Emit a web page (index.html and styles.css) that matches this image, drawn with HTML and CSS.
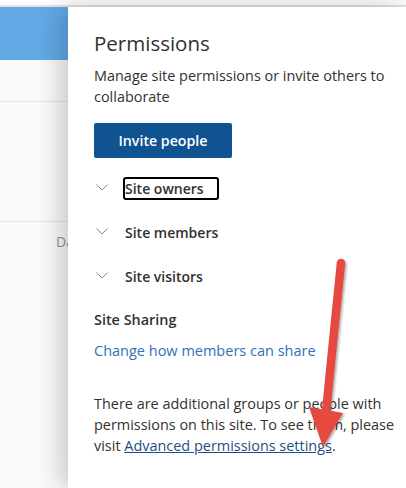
FILE: index.html
```html
<!DOCTYPE html>
<html lang="en">
<head>
<meta charset="utf-8">
<title>Permissions</title>
<link rel="stylesheet" href="styles.css">
</head>
<body>
<div class="topstrip"></div>
<div class="main">
  <div class="page">
    <div class="page-header"></div>
    <div class="page-row page-row-1"></div>
    <div class="page-row page-row-2"><span class="page-cell">Da</span></div>
  </div>
  <aside class="panel">
    <h1 class="title">Permissions</h1>
    <p class="subtitle">Manage site permissions or invite others to collaborate</p>
    <button class="invite">Invite people</button>
    <ul class="groups">
      <li class="group">
        <svg class="chev" width="12" height="7" viewBox="0 0 12 7"><path d="M0.5 0.5 L6 6 L11.5 0.5" fill="none" stroke="#8a8886" stroke-width="1"/></svg>
        <span class="group-label focused">Site owners</span>
      </li>
      <li class="group">
        <svg class="chev" width="12" height="7" viewBox="0 0 12 7"><path d="M0.5 0.5 L6 6 L11.5 0.5" fill="none" stroke="#8a8886" stroke-width="1"/></svg>
        <span class="group-label">Site members</span>
      </li>
      <li class="group">
        <svg class="chev" width="12" height="7" viewBox="0 0 12 7"><path d="M0.5 0.5 L6 6 L11.5 0.5" fill="none" stroke="#8a8886" stroke-width="1"/></svg>
        <span class="group-label">Site visitors</span>
      </li>
    </ul>
    <h2 class="section">Site Sharing</h2>
    <a class="share-link" href="#">Change how members can share</a>
    <p class="note">There are additional groups or people with permissions on this site. To see them, please visit <a class="adv-link" href="#">Advanced permissions settings</a>.</p>
  </aside>
</div>
<svg class="arrow" width="406" height="488" viewBox="0 0 406 488">
  <defs>
    <filter id="sh" x="-20%" y="-20%" width="140%" height="140%">
      <feDropShadow dx="1.5" dy="1.5" stdDeviation="1.2" flood-color="#000" flood-opacity="0.35"/>
    </filter>
  </defs>
  <g filter="url(#sh)" fill="#e5483f">
    <line x1="341" y1="263" x2="326" y2="412" stroke="#e5483f" stroke-width="8.5" stroke-linecap="round"/>
    <polygon points="309,407 343,413 323,447"/>
  </g>
</svg>
</body>
</html>
```

FILE: styles.css
```css
* { box-sizing: border-box; }
html, body { margin: 0; padding: 0; }
body {
  width: 406px;
  height: 488px;
  overflow: hidden;
  background: #ffffff;
  font-family: "Open Sans", "Noto Sans", sans-serif;
  color: #323130;
  position: relative;
}
.topstrip {
  height: 7px;
  border-bottom: 2px solid #e3e3e8;
  background: #fff;
}
.main {
  display: flex;
  height: 481px;
}
.page {
  width: 68px;
  flex: 0 0 68px;
  background: #fafafa;
  overflow: hidden;
}
.page-header {
  height: 53px;
  background: #62a9e6;
}
.page-row {
  border-bottom: 1px solid #e6e6e6;
}
.page-row-1 { height: 42px; }
.page-row-2 {
  height: 120px;
  display: flex;
  align-items: flex-end;
  padding-left: 56px;
}
.page-cell {
  font-size: 14px;
  color: #9a928e;
  white-space: nowrap;
  margin-bottom: -30px;
}
.panel {
  flex: 1;
  background: #fff;
  padding: 22px 8px 0 26px;
  box-shadow: -6px 0 26px rgba(0, 0, 0, 0.22);
  position: relative;
}
.title {
  margin: 0;
  font-size: 20.5px;
  font-weight: 400;
  line-height: 28px;
}
.subtitle {
  margin: 9px 0 0;
  font-size: 14.45px;
  line-height: 20.5px;
}
.invite {
  margin-top: 16px;
  display: block;
  width: 138px;
  height: 35px;
  border: none;
  border-radius: 2px;
  background: #0f5391;
  color: #fff;
  font-family: inherit;
  font-size: 14.2px;
  font-weight: 600;
  padding: 0;
}
.groups {
  list-style: none;
  margin: 8px 0 0;
  padding: 0;
}
.group {
  height: 44px;
  display: flex;
  align-items: center;
  font-size: 14px;
  font-weight: 600;
}
.chev {
  margin-left: 2px;
  margin-right: 17px;
  margin-top: -2px;
}
.group-label {
  border: 2px solid transparent;
  border-radius: 3px;
  padding: 0 13px 0 0;
  line-height: 19px;
  margin-left: -2px;
}
.group-label.focused {
  border-color: #000;
}
.section {
  margin: 12px 0 0;
  font-size: 14.4px;
  font-weight: 600;
  line-height: 20px;
}
.share-link {
  display: block;
  margin-top: 11px;
  font-size: 14.5px;
  line-height: 20px;
  color: #2e72b6;
  text-decoration: none;
}
.note {
  margin: 32px 0 0;
  font-size: 14.45px;
  line-height: 21px;
}
.adv-link {
  color: #1d4f80;
  text-decoration: underline;
}
.arrow {
  position: absolute;
  left: 0;
  top: 0;
  pointer-events: none;
}
```
